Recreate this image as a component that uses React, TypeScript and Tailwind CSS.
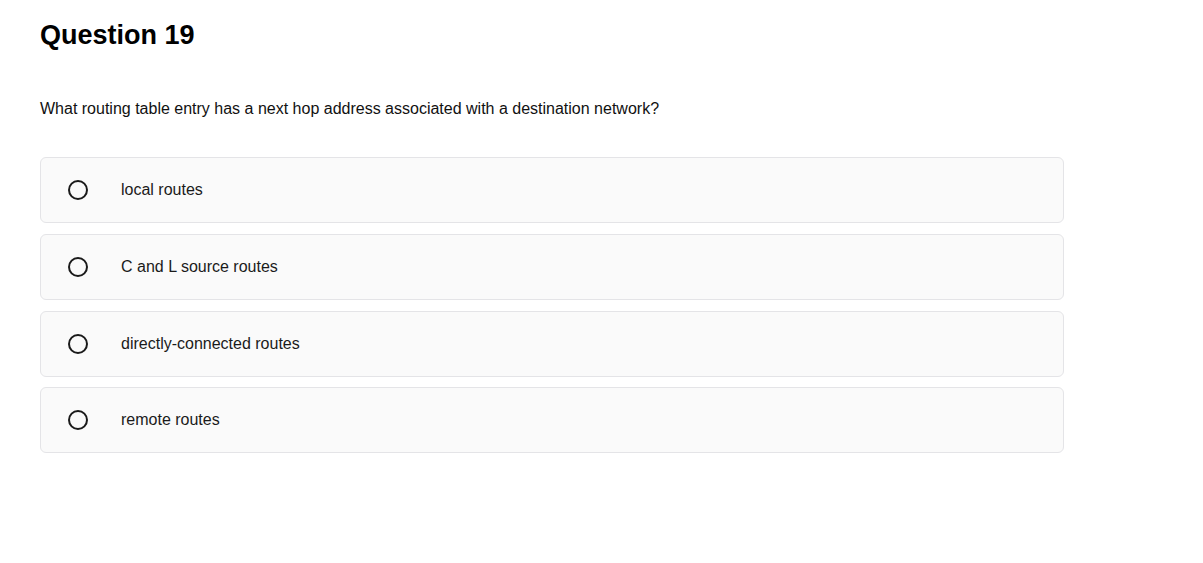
const options = [
  "local routes",
  "C and L source routes",
  "directly-connected routes",
  "remote routes",
];

export default function App() {
  return (
    <div className="min-h-[563px] bg-white font-['Liberation_Sans',Arial,sans-serif] text-[#111]">
      <div className="w-[1024px] ml-10 pt-[19px]">
        <h1 className="text-[27px] leading-[32px] font-bold text-black">Question 19</h1>

        <p className="mt-[48px] text-[16px] leading-[20px] text-[#111]">
          What routing table entry has a next hop address associated with a destination network?
        </p>

        {/* Answer choices */}
        <div className="mt-[38px] flex flex-col gap-[11px]">
          {options.map((o, i) => (
            <label
              key={o}
              className={
                "flex items-center rounded-md border border-[#e4e4e7] bg-[#fafafa] cursor-pointer " +
                (i === 3 ? "h-[66px] -mt-[1px]" : "h-[66px]")
              }
            >
              <span className="ml-[27px] w-[20px] h-[20px] rounded-full border-2 border-[#1a1a1a] shrink-0" />
              <span className="ml-[33px] text-[16px] text-[#1a1a1a]">{o}</span>
            </label>
          ))}
        </div>
      </div>
    </div>
  );
}
